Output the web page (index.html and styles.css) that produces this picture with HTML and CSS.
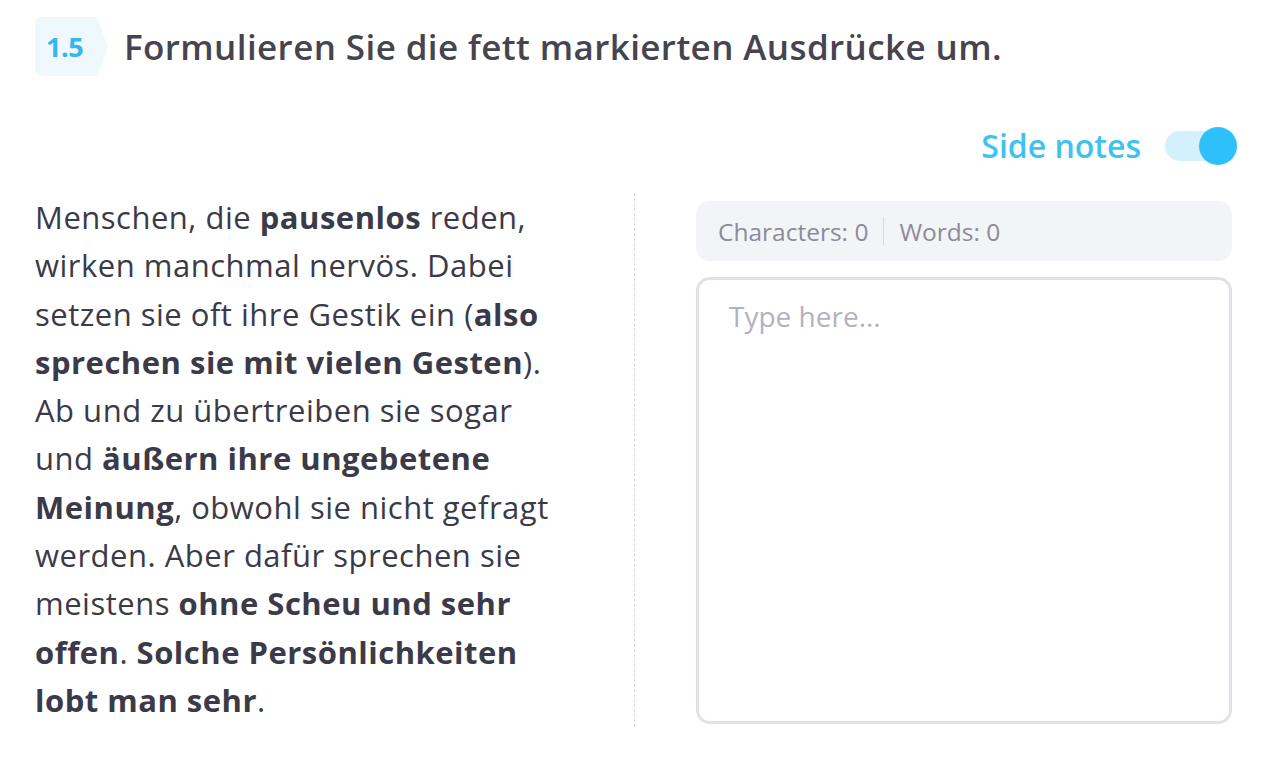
FILE: index.html
```html
<!DOCTYPE html>
<html lang="de">
<head>
    <meta charset="UTF-8">
    <title>1.5 Formulieren</title>
    <link rel="stylesheet" href="styles.css">
</head>
<body>
<div class="task">
    <div class="task-head">
        <span class="task-num">1.5</span>
        <h1 class="task-title">Formulieren Sie die fett markierten Ausdrücke um.</h1>
    </div>

    <div class="notes-switch">
        <span class="notes-label">Side notes</span>
        <span class="toggle on"><span class="knob"></span></span>
    </div>

    <div class="task-body">
        <p class="text">
            Menschen, die <b>pausenlos</b> reden,<br>
            wirken manchmal nervös. Dabei<br>
            setzen sie oft ihre Gestik ein (<b>also<br>
            sprechen sie mit vielen Gesten</b>).<br>
            Ab und zu übertreiben sie sogar<br>
            und <b>äußern ihre ungebetene<br>
            Meinung</b>, obwohl sie nicht gefragt<br>
            werden. Aber dafür sprechen sie<br>
            meistens <b>ohne Scheu und sehr<br>
            offen</b>. <b>Solche Persönlichkeiten<br>
            lobt man sehr</b>.
        </p>
        <div class="divider"></div>
        <div class="answer">
            <div class="counter">
                <span>Characters: 0</span>
                <span class="sep"></span>
                <span>Words: 0</span>
            </div>
            <textarea class="answer-box" placeholder="Type here..."></textarea>
        </div>
    </div>
</div>
</body>
</html>
```

FILE: styles.css
```css
*{
    margin: 0;
    padding: 0;
    box-sizing: border-box;
}
body{
    background: #fff;
    font-family: "Open Sans", "Noto Sans", sans-serif;
    color: #3b3a48;
}
.task{
    padding: 17px 43px 0 35px;
}
.task-head{
    display: flex;
    align-items: center;
    gap: 16px;
}
.task-num{
    display: flex;
    align-items: center;
    width: 73px;
    height: 59px;
    padding-left: 11px;
    background: #eef8fd;
    clip-path: polygon(0 0, 85% 0, 100% 50%, 85% 100%, 0 100%);
    border-radius: 6px 0 0 6px;
    color: #35b6ef;
    font-size: 27px;
    font-weight: 700;
    letter-spacing: -0.5px;
}
.task-title{
    font-size: 35px;
    font-weight: 600;
    letter-spacing: 0.4px;
    color: #45444f;
}
.notes-switch{
    display: flex;
    justify-content: flex-end;
    align-items: center;
    gap: 24px;
    margin-top: 48px;
}
.notes-label{
    font-size: 32px;
    font-weight: 600;
    color: #3ec2f0;
}
.toggle{
    position: relative;
    width: 72px;
    height: 30px;
    border-radius: 15px;
    background: #d4f0fc;
}
.toggle .knob{
    position: absolute;
    right: 0;
    top: -4px;
    width: 38px;
    height: 38px;
    border-radius: 50%;
    background: #2ec0fa;
}
.task-body{
    display: flex;
    margin-top: 26px;
}
.text{
    width: 568px;
    white-space: nowrap;
    font-size: 31px;
    letter-spacing: 0.5px;
    line-height: 48.3px;
    color: #3b3a48;
}
.text b{
    font-weight: 700;
}
.divider{
    width: 0;
    margin: 0 0 0 31px;
    height: 534px;
    border-left: 1px dashed #d6d6dc;
}
.answer{
    margin-left: 61px;
    width: 536px;
    margin-top: 8px;
}
.counter{
    display: flex;
    align-items: center;
    height: 60px;
    padding: 0 22px;
    background: #f3f4f8;
    border-radius: 14px;
    font-size: 24.5px;
    color: #8c8b99;
}
.counter .sep{
    width: 1px;
    height: 28px;
    background: #d8d8e0;
    margin: 0 15px;
}
.answer-box{
    display: block;
    width: 100%;
    height: 447px;
    margin-top: 16px;
    padding: 17px 30px;
    border: 3px solid #e1e1ea;
    border-radius: 14px;
    resize: none;
    outline: none;
    font-family: inherit;
    font-size: 28px;
    color: #3b3a48;
}
.answer-box::placeholder{
    color: #b3b2c2;
}
```
